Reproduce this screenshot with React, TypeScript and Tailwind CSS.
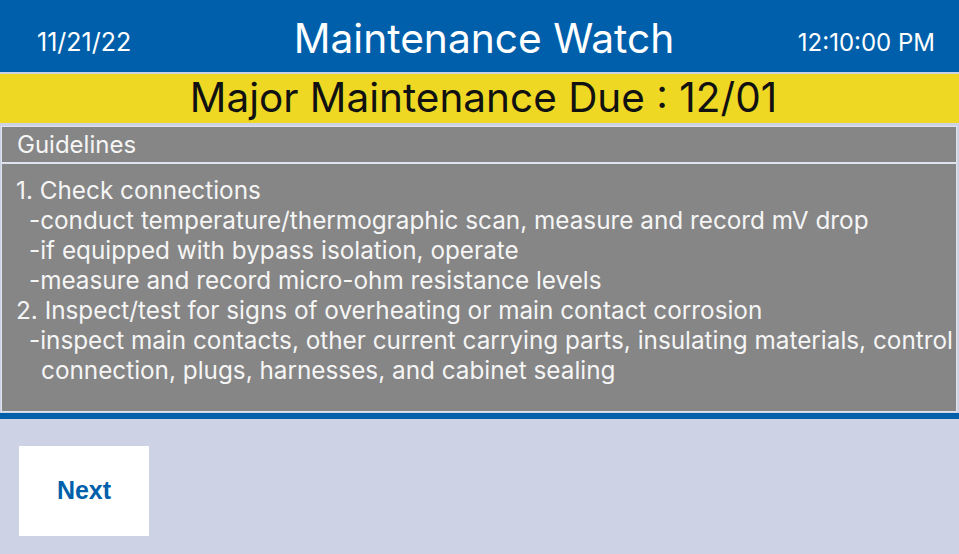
import React from 'react';

const steps = [
  { text: '1. Check connections', indent: '' },
  { text: '-conduct temperature/thermographic scan, measure and record mV drop', indent: 'pl-[13px]' },
  { text: '-if equipped with bypass isolation, operate', indent: 'pl-[13px]' },
  { text: '-measure and record micro-ohm resistance levels', indent: 'pl-[13px]' },
  { text: '2. Inspect/test for signs of overheating or main contact corrosion', indent: '' },
  { text: '-inspect main contacts, other current carrying parts, insulating materials, control', indent: 'pl-[13px]' },
  { text: 'connection, plugs, harnesses, and cabinet sealing', indent: 'pl-[25px]' },
];

// Maintenance Watch screen
export default function App() {
  return (
    <div className="w-[959px] h-[554px] bg-[#cdd3e5] flex flex-col font-['Inter',sans-serif] overflow-hidden">
      <div className="h-[72px] bg-[#005fab] grid grid-cols-[1fr_auto_1fr] items-center pl-[37px] pr-[24px] text-white">
        <span className="text-[25px] mt-[13px]">11/21/22</span>
        <span className="text-[40.7px] leading-none mt-[6px] -ml-[4px]">Maintenance Watch</span>
        <span className="text-[24px] mt-[13px] justify-self-end">12:10:00 PM</span>
      </div>
      <div className="h-[49px] mt-[2px] bg-[#eed823] flex items-center justify-center text-[#111111]">
        <span className="text-[40.5px] leading-none ml-[8px]">Major Maintenance Due : 12/01</span>
      </div>
      <div className="mt-[3px] ml-[1px] mr-[2px] h-[286px] bg-[#868686] border border-[#dfe3ee] flex flex-col text-[#f5f5f5]">
        <div className="h-[37px] flex items-center px-[15px] text-[24px] border-b-2 border-[#dfe3ee]">
          Guidelines
        </div>
        <div className="px-[14px] pt-[11px] text-[24.3px] leading-[30px]">
          {steps.map((s, i) => (
            <div key={i} className={`${s.indent} whitespace-nowrap`}>{s.text}</div>
          ))}
        </div>
      </div>
      <div className="h-[6px] mt-[1px] bg-[#005fab]" />
      <div className="pl-[19px] pt-[27px]">
        <button className="w-[130px] h-[90px] bg-white text-[#005fab] font-['Liberation_Sans',Arial,sans-serif] font-bold text-[25px]">
          Next
        </button>
      </div>
    </div>
  );
}
